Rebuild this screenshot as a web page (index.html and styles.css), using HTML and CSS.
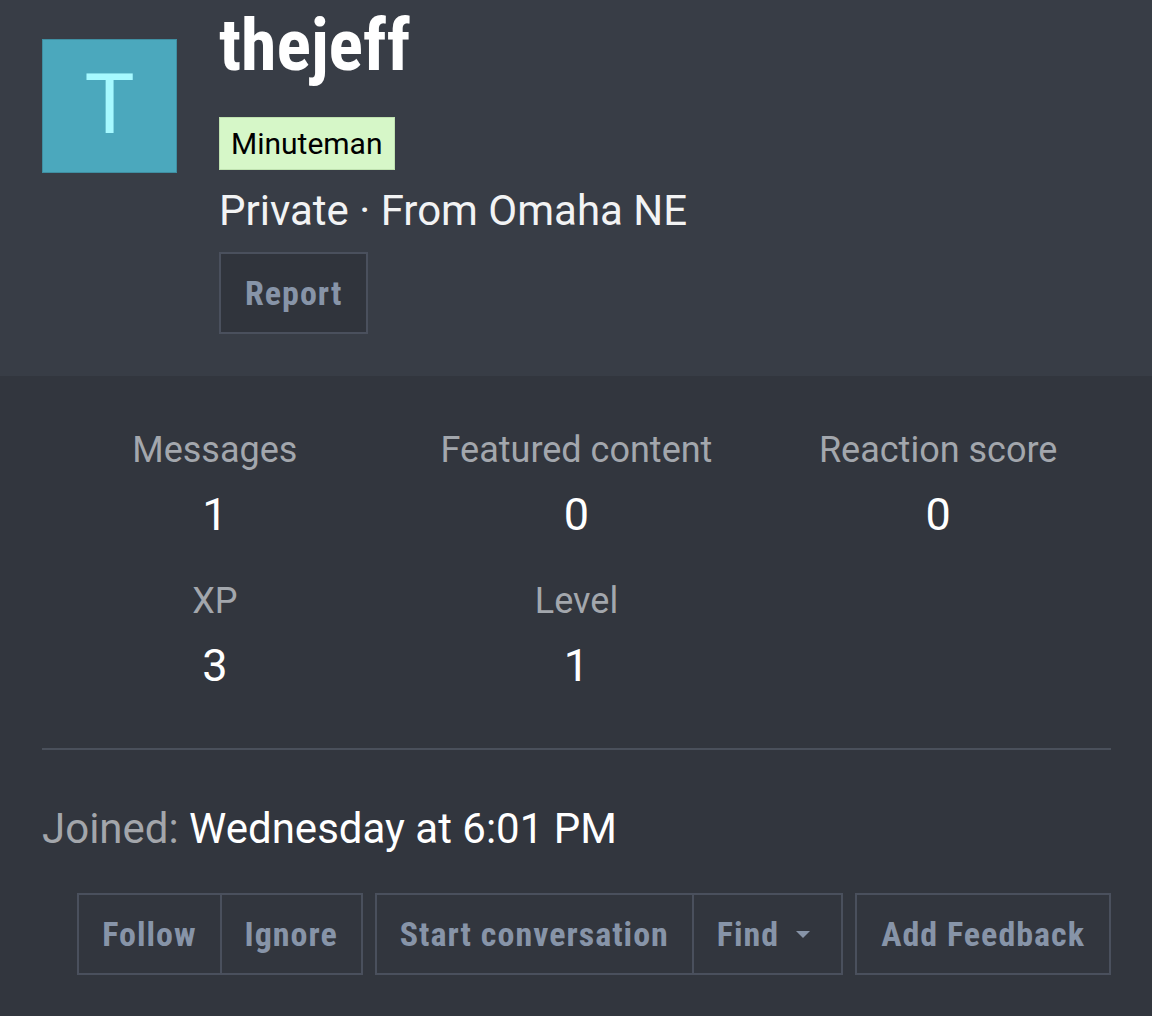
FILE: index.html
```html
<!DOCTYPE html>
<html lang="en">
<head>
    <meta charset="UTF-8">
    <meta name="viewport" content="width=device-width, initial-scale=1.0">
    <title>thejeff | Member</title>
    <link rel="stylesheet" href="styles.css">
</head>
<body>
    <div class="profile-header">
        <div class="avatar">T</div>
        <div class="profile-info">
            <h1 class="username">thejeff</h1>
            <div><span class="user-title">Minuteman</span></div>
            <div class="user-blurb">Private · From Omaha NE</div>
            <div><a class="button" href="#">Report</a></div>
        </div>
    </div>

    <div class="profile-body">
        <!-- stats -->
        <div class="stats">
            <div class="stat">
                <div class="stat-label">Messages</div>
                <div class="stat-value">1</div>
            </div>
            <div class="stat">
                <div class="stat-label">Featured content</div>
                <div class="stat-value">0</div>
            </div>
            <div class="stat">
                <div class="stat-label">Reaction score</div>
                <div class="stat-value">0</div>
            </div>
            <div class="stat">
                <div class="stat-label">XP</div>
                <div class="stat-value">3</div>
            </div>
            <div class="stat">
                <div class="stat-label">Level</div>
                <div class="stat-value">1</div>
            </div>
        </div>

        <div class="divider"></div>

        <div class="joined"><span class="joined-label">Joined:</span> Wednesday at 6:01 PM</div>

        <!-- actions -->
        <div class="actions">
            <div class="button-group">
                <a class="button" href="#">Follow</a>
                <a class="button" href="#">Ignore</a>
            </div>
            <div class="button-group">
                <a class="button" href="#">Start conversation</a>
                <a class="button" href="#">Find <span class="caret"></span></a>
            </div>
            <a class="button" href="#">Add Feedback</a>
        </div>
    </div>
</body>
</html>
```

FILE: styles.css
```css
body {
    margin: 0;
    background: #32363e;
    font-family: Roboto, "Noto Sans", sans-serif;
    color: #f2f3f4;
}
.profile-header {
    display: flex;
    gap: 42px;
    height: 376px;
    box-sizing: border-box;
    padding: 7px 42px 0;
    background: #383d46;
}
.avatar {
    width: 135px;
    height: 134px;
    box-sizing: border-box;
    margin-top: 32px;
    flex-shrink: 0;
    display: flex;
    align-items: center;
    justify-content: center;
    padding-bottom: 2px;
    background: #4ba8bd;
    border: 1px solid #3f8fa2;
    color: #a6f9ff;
    font-size: 84px;
    line-height: 1;
}
.profile-info {
    display: flex;
    flex-direction: column;
    align-items: flex-start;
}
.username {
    margin: 0;
    font-family: "Roboto Condensed", "Liberation Sans Narrow", sans-serif;
    font-size: 72px;
    line-height: 78px;
    font-weight: bold;
    color: #ffffff;
}
.user-title {
    display: inline-block;
    margin-top: 32px;
    padding: 0 11px;
    height: 53px;
    line-height: 51px;
    box-sizing: border-box;
    background: #d6f7c8;
    border: 1px solid #bfe2b0;
    color: #000;
    font-size: 30px;
}
.user-blurb {
    margin-top: 18px;
    font-size: 42px;
    line-height: 46px;
}
.profile-info .button {
    margin-top: 18px;
    background: #30343c;
}
.button {
    display: inline-flex;
    align-items: center;
    gap: 17px;
    height: 82px;
    box-sizing: border-box;
    padding: 0 24px;
    border: 2px solid #4a505d;
    color: #8794a8;
    text-decoration: none;
    font-family: "Roboto Condensed", "Liberation Sans Narrow", sans-serif;
    font-weight: bold;
    font-size: 34px;
    letter-spacing: 1px;
}
.profile-body {
    padding: 0 41px 0 42px;
}
.stats {
    display: grid;
    grid-template-columns: repeat(3, 1fr);
    margin: 0 -8px;
    padding-top: 50px;
    row-gap: 35px;
}
.stat {
    text-align: center;
}
.stat-label {
    color: #a3a7ad;
    font-size: 36px;
    line-height: 48px;
}
.stat-value {
    margin-top: 14px;
    color: #ffffff;
    font-size: 45px;
    line-height: 54px;
}
.divider {
    margin-top: 55px;
    height: 2px;
    background: #4a505b;
}
.joined {
    margin-top: 55px;
    font-size: 42px;
    line-height: 48px;
    color: #ffffff;
}
.joined-label {
    color: #a3a6ab;
}
.actions {
    display: flex;
    justify-content: flex-end;
    gap: 12px;
    margin-top: 40px;
}
.button-group {
    display: flex;
    border: 2px solid #4a505d;
}
.button-group .button {
    height: 78px;
    padding: 0 23px;
    border: none;
}
.button-group .button + .button {
    border-left: 2px solid #4a505d;
}
.caret {
    width: 0;
    height: 0;
    margin-right: 8px;
    border-left: 7px solid transparent;
    border-right: 7px solid transparent;
    border-top: 7px solid #8794a8;
}
```
